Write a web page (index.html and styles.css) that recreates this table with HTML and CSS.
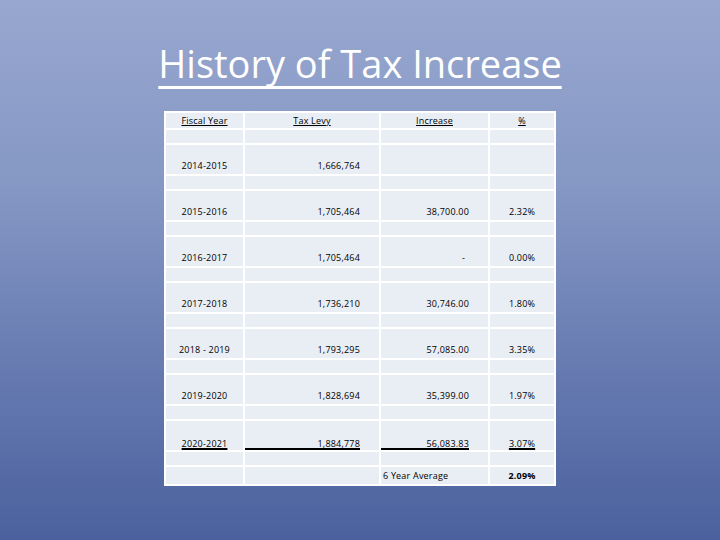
FILE: index.html
```html
<!DOCTYPE html>
<html>
<head>
<meta charset="utf-8">
<link rel="stylesheet" href="styles.css">
</head>
<body>
<div class="slide">
  <h1 class="title">History of Tax Increase</h1>
  <table class="levy">
    <colgroup>
      <col class="c1"><col class="c2"><col class="c3"><col class="c4">
    </colgroup>
    <tr class="head">
      <td><span class="hu">Fiscal Year</span></td>
      <td><span class="hu">Tax Levy</span></td>
      <td><span class="hu">Increase</span></td>
      <td><span class="hu">%</span></td>
    </tr>
    <tr class="gap"><td></td><td></td><td></td><td></td></tr>
    <tr class="data">
      <td class="yr">2014-2015</td><td class="num">1,666,764</td><td class="num"></td><td class="pct"></td>
    </tr>
    <tr class="gap"><td></td><td></td><td></td><td></td></tr>
    <tr class="data">
      <td class="yr">2015-2016</td><td class="num">1,705,464</td><td class="num">38,700.00</td><td class="pct">2.32%</td>
    </tr>
    <tr class="gap"><td></td><td></td><td></td><td></td></tr>
    <tr class="data">
      <td class="yr">2016-2017</td><td class="num">1,705,464</td><td class="num dash">-</td><td class="pct">0.00%</td>
    </tr>
    <tr class="gap"><td></td><td></td><td></td><td></td></tr>
    <tr class="data">
      <td class="yr">2017-2018</td><td class="num">1,736,210</td><td class="num">30,746.00</td><td class="pct">1.80%</td>
    </tr>
    <tr class="gap"><td></td><td></td><td></td><td></td></tr>
    <tr class="data">
      <td class="yr">2018 - 2019</td><td class="num">1,793,295</td><td class="num">57,085.00</td><td class="pct">3.35%</td>
    </tr>
    <tr class="gap"><td></td><td></td><td></td><td></td></tr>
    <tr class="data">
      <td class="yr">2019-2020</td><td class="num">1,828,694</td><td class="num">35,399.00</td><td class="pct">1.97%</td>
    </tr>
    <tr class="gap"><td></td><td></td><td></td><td></td></tr>
    <tr class="data last">
      <td class="yr"><span class="ul">2020-2021</span></td>
      <td class="num acct"><span class="line">1,884,778</span></td>
      <td class="num acct"><span class="line">56,083.83</span></td>
      <td class="pct"><span class="ul">3.07%</span></td>
    </tr>
    <tr class="gap"><td></td><td></td><td></td><td></td></tr>
    <tr class="foot">
      <td></td><td></td><td class="avg">6 Year Average</td><td class="pct bold">2.09%</td>
    </tr>
  </table>
</div>
</body>
</html>
```

FILE: styles.css
```css
html, body {
  margin: 0;
  padding: 0;
}

.slide {
  width: 720px;
  height: 540px;
  overflow: hidden;
  display: flex;
  flex-direction: column;
  align-items: center;
  background: linear-gradient(180deg, #97a7cf 0%, #8597c4 35%, #6579b0 70%, #4b619e 100%);
  font-family: "Open Sans", "DejaVu Sans", sans-serif;
}

.title {
  margin: 0;
  padding-top: 37px;
  font-size: 38px;
  line-height: 52px;
  font-weight: 400;
  color: #ffffff;
  text-decoration: underline;
  text-decoration-thickness: 3px;
  text-underline-offset: 8px;
  text-decoration-skip-ink: none;
  white-space: nowrap;
}

.levy {
  margin-top: 22px;
  width: 392px;
  table-layout: fixed;
  border-collapse: separate;
  border-spacing: 2px;
  background: #ffffff;
  font-size: 9px;
  line-height: 12px;
  color: #000000;
  letter-spacing: 0.2px;
}

.c1 { width: 77px; }
.c2 { width: 134px; }
.c3 { width: 107px; }
.c4 { width: 64px; }

.levy td {
  background: #e9edf4;
  padding: 0;
  white-space: nowrap;
  overflow: visible;
}

.head { height: 15px; }
.gap { height: 13px; }
.data { height: 29px; }
.foot { height: 17px; }

.head td {
  text-align: center;
  vertical-align: middle;
}

.hu {
  text-decoration: underline;
  text-decoration-thickness: 1px;
  text-underline-offset: 1px;
}

.data td,
.foot td {
  vertical-align: bottom;
  padding-bottom: 2px;
}

.yr { text-align: center; }

.num {
  text-align: right;
  padding-right: 19px !important;
}

.num.dash { padding-right: 23px !important; }

.pct { text-align: center; }

.last td { padding-bottom: 0; }

.ul {
  text-decoration: underline;
  text-decoration-thickness: 2px;
  text-underline-offset: 1px;
  text-decoration-skip-ink: none;
}

.line {
  display: block;
  line-height: 8px;
  border-bottom: 2px solid #000000;
}

.avg {
  text-align: left;
  padding-left: 2px !important;
}

.bold { font-weight: 700; }
```
